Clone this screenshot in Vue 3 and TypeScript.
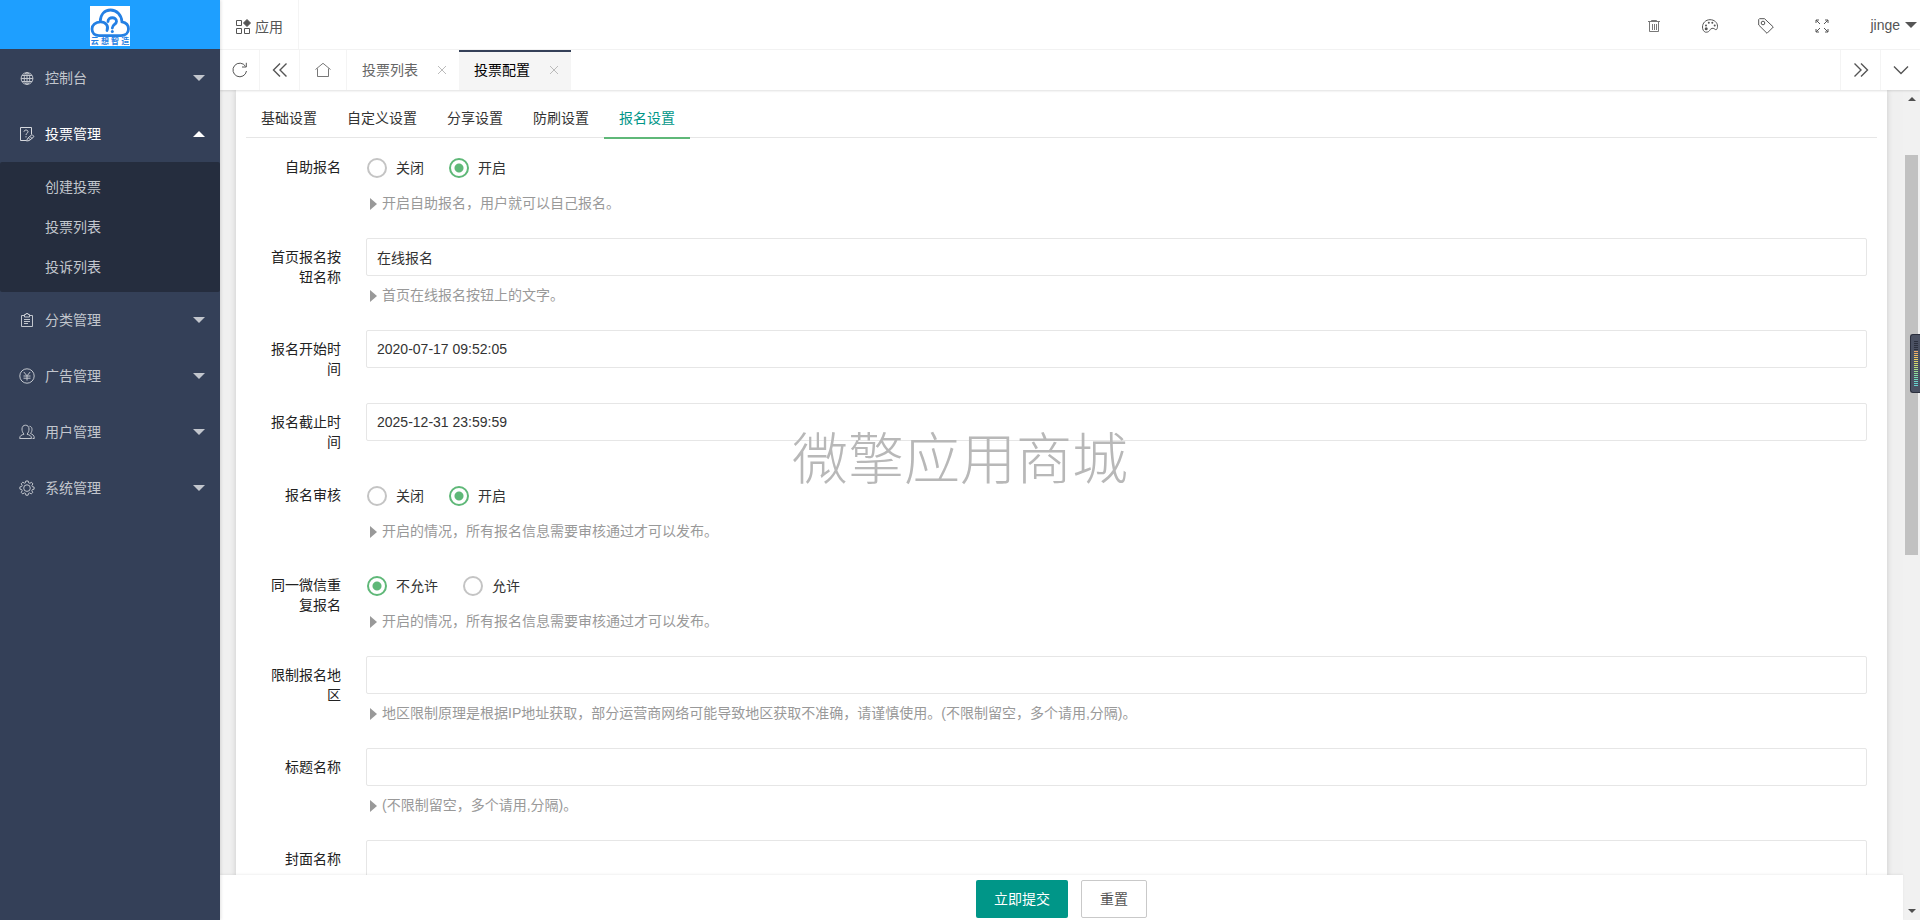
<script setup lang="ts">
import { ref } from 'vue'

interface MenuItem { title: string; icon: string; children?: string[] }
interface Option { text: string; value: string }
interface Field {
  id: string
  label: string
  kind: 'radio' | 'text'
  options?: Option[]
  help?: string
}

const menu: MenuItem[] = [
  { title: '控制台', icon: 'globe' },
  { title: '投票管理', icon: 'vote', children: ['创建投票', '投票列表', '投诉列表'] },
  { title: '分类管理', icon: 'clipboard' },
  { title: '广告管理', icon: 'yen' },
  { title: '用户管理', icon: 'users' },
  { title: '系统管理', icon: 'gear' },
]
const openMenu = ref('投票管理')

const formTabs: string[] = ['基础设置', '自定义设置', '分享设置', '防刷设置', '报名设置']
const activeTab = ref('报名设置')

const switchOptions: Option[] = [
  { text: '关闭', value: '0' },
  { text: '开启', value: '1' },
]
const reviewHelp = '开启的情况，所有报名信息需要审核通过才可以发布。'

const fields: Field[] = [
  { id: 'self', label: '自助报名', kind: 'radio', options: switchOptions, help: '开启自助报名，用户就可以自己报名。' },
  { id: 'button', label: '首页报名按钮名称', kind: 'text', help: '首页在线报名按钮上的文字。' },
  { id: 'start', label: '报名开始时间', kind: 'text' },
  { id: 'end', label: '报名截止时间', kind: 'text' },
  { id: 'review', label: '报名审核', kind: 'radio', options: switchOptions, help: reviewHelp },
  {
    id: 'repeat',
    label: '同一微信重复报名',
    kind: 'radio',
    options: [{ text: '不允许', value: '0' }, { text: '允许', value: '1' }],
    help: reviewHelp,
  },
  { id: 'area', label: '限制报名地区', kind: 'text', help: '地区限制原理是根据IP地址获取，部分运营商网络可能导致地区获取不准确，请谨慎使用。(不限制留空，多个请用,分隔)。' },
  { id: 'title', label: '标题名称', kind: 'text', help: '(不限制留空，多个请用,分隔)。' },
  { id: 'cover', label: '封面名称', kind: 'text' },
]

const initial: Record<string, string> = {
  self: '1',
  button: '在线报名',
  start: '2020-07-17 09:52:05',
  end: '2025-12-31 23:59:59',
  review: '1',
  repeat: '0',
  area: '',
  title: '',
  cover: '',
}
const values = ref<Record<string, string>>({ ...initial })
const reset = () => { values.value = { ...initial } }
const toggle = (title: string) => { openMenu.value = openMenu.value === title ? '' : title }

const meterColors: string[] = [
  '#2b2f3d', '#2b2f3d', '#2b2f3d', '#2b2f3d', '#2b2f3d',
  '#f0a868', '#f0b266', '#f0bc64', '#efc662', '#ecd062', '#e2d566', '#d6d96c',
  '#c8dc74', '#b9de7c', '#aadf86', '#9cdf90', '#8fde9b', '#84dda6', '#7adbb1', '#72d9bc', '#6cd6c6', '#66d3cf', '#66d3cf',
]
</script>

<template>
  <div class="app">
    <aside class="side">
      <div class="brand">
        <svg class="logo" viewBox="0 0 40 40" role="img" aria-label="云想智造">
          <rect width="40" height="40" fill="#fff" />
          <g fill="none" stroke="#2480e4" stroke-width="2.8" stroke-linecap="round">
            <path d="M17 24.500C19 20 15.500 15.800 10.500 15.900C5.500 16 2 19.200 2 23C2 27.200 5 29.600 9 29.600H31C35.500 29.600 38.500 26.800 38.500 23C38.500 19.300 36 16.600 32 15.900C31.500 8.500 26.500 4 20.500 4C14.500 4 10.500 8.500 10.200 15.500" />
            <path d="M18 15.500C18 10.500 26.500 10.500 26.500 15.500C26.500 18.500 22.300 18.500 22.300 22" />
          </g>
          <circle cx="22.300" cy="25.500" r="1.500" fill="#2480e4" />
          <text class="logo-text" x="20" y="38.200" text-anchor="middle">云 想 智 造</text>
        </svg>
      </div>
      <nav>
        <ul class="menu">
          <li v-for="item in menu" :key="item.title">
            <button type="button" class="menu-item" :class="{ open: openMenu === item.title }" @click="toggle(item.title)">
              <svg class="ico" viewBox="0 0 16 16" aria-hidden="true">
                <g v-if="item.icon === 'globe'">
                  <circle cx="8" cy="8.500" r="5.900" />
                  <ellipse cx="8" cy="8.500" rx="2.800" ry="5.900" />
                  <path d="M2.100 8.500H13.900M8 2.600V14.400M3 5.500H13M3 11.500H13" />
                </g>
                <g v-else-if="item.icon === 'vote'">
                  <path d="M7 14.500H1.500V1.500H12.500V8M5 5.700C5 3.500 9 3.500 9 5.700C9 7.300 7 7.300 7 8.900M7 10.200V11.400" />
                  <path d="M7.500 15L8.500 12.500L13 8.500L15 10.500L10.500 14.500ZM11 10.500L13 12.500M9.500 12L11.500 14" />
                </g>
                <g v-else-if="item.icon === 'clipboard'">
                  <path d="M5 3.500H2.500V14.500H13.500V3.500H11M5.500 5V2.500H7V1.500H9V2.500H10.500V5ZM5 7.500H11M5 9.500H11M5 11.500H9" />
                </g>
                <g v-else-if="item.icon === 'yen'">
                  <circle cx="8" cy="8" r="7.200" />
                  <path d="M4.800 4L8 7.800L11.200 4M8 7.800V12.500M4.500 8H11.500M4.500 10.200H11.500" />
                </g>
                <g v-else-if="item.icon === 'users'">
                  <path d="M.7 14.500C.7 11.500 2.500 11 5 10.200C3.500 8.500 3 7 3 5C3 2.500 4.500 1.200 6.500 1.200C8.500 1.200 10 2.500 10 5C10 7 9.500 8.500 8 10.200C10.500 11 12.500 11.500 12.500 14.500Z" />
                  <path d="M10.500 2.200C12.500 2.500 13 4 13 5.500C13 7 12.500 8.300 11.500 9.500C13.500 10.500 15.300 11 15.300 14.500H13.500" />
                </g>
                <g v-else>
                  <path d="M6.800 1H9.200L9.600 2.800L10.900 3.300L12.500 2.300L13.900 3.900L12.900 5.400L13.400 6.700L15.100 7.100V9.200L13.300 9.600L12.800 10.800L13.800 12.400L12.200 13.900L10.700 12.900L9.500 13.400L9.100 15.200H6.900L6.500 13.400L5.300 12.900L3.700 13.900L2.200 12.300L3.200 10.800L2.700 9.500L.9 9.100V6.900L2.700 6.500L3.200 5.300L2.200 3.800L3.800 2.200L5.300 3.200L6.400 2.800Z" />
                  <circle cx="8" cy="8.100" r="3.300" />
                </g>
              </svg>
              <span class="menu-title">{{ item.title }}</span>
              <i class="caret" />
            </button>
            <ul v-if="item.children && openMenu === item.title" class="submenu">
              <li v-for="child in item.children" :key="child"><a href="#">{{ child }}</a></li>
            </ul>
          </li>
        </ul>
      </nav>
    </aside>

    <div class="main">
      <header class="top">
        <a href="#" class="apps">
          <svg class="ico" viewBox="0 0 16 16" aria-hidden="true">
            <path d="M1.500 1.500H6.500V6.500H1.500ZM1.500 9.500H6.500V14.500H1.500ZM9.500 9.500H14.500V14.500H9.500Z" />
            <path class="solid" d="M12 .5L15.500 4L12 7.500L8.500 4Z" />
          </svg>
          <span>应用</span>
        </a>
        <div class="tools">
          <button type="button" class="tool" aria-label="清理">
            <svg class="ico light" viewBox="0 0 16 16"><path d="M2 3.500H14M5.500 3V2.500H10.500V3M3.500 4V13.500H12.500V4M6.500 6V12M8.500 6V12M10.500 6V12" /></svg>
          </button>
          <button type="button" class="tool" aria-label="主题">
            <svg class="ico" viewBox="0 0 16 16">
              <path d="M3.500 14.200C1.500 13.500 .5 11.500 .5 9C.5 5 3.700 1.700 8 1.700C12.300 1.700 15.500 4.500 15.500 8.200C15.500 10.800 14.500 12.300 13.300 11.500C11.800 10.300 10.500 9.700 8.800 11C7.500 12 7.500 14.400 3.500 14.200Z" />
              <g class="dots"><circle cx="4.200" cy="10.800" r="1.500" /><circle cx="4" cy="7.500" r="1" /><circle cx="6.800" cy="4.800" r="1" /><circle cx="10.300" cy="4.800" r="1" /><circle cx="12.700" cy="7.500" r="1" /></g>
            </svg>
          </button>
          <button type="button" class="tool" aria-label="便签">
            <svg class="ico" viewBox="0 0 16 16"><path d="M.7 1.500L1.500 .7H6.500L15.300 9L9 15.300L.7 7Z" /><circle cx="5" cy="5" r="1.800" /></svg>
          </button>
          <button type="button" class="tool" aria-label="全屏">
            <svg class="ico" viewBox="0 0 16 16"><path d="M2 5V2H5M2 2L6 6M11 2H14V5M14 2L10 6M2 11V14H5M2 14L6 10M14 11V14H11M14 14L10 10" /></svg>
          </button>
          <button type="button" class="user">jinge<i class="caret" /></button>
        </div>
      </header>

      <div class="tabbar">
        <button type="button" class="cell" aria-label="刷新">
          <svg class="ico" viewBox="0 0 16 16"><path d="M14.500 9A6.800 6.800 0 1 1 13.500 4.300M14.300 .8V5H10" /></svg>
        </button>
        <button type="button" class="cell" aria-label="向左">
          <svg class="ico bold" viewBox="0 0 16 16"><path d="M8 1.500L1.500 8L8 14.500M14.500 1.500L8 8L14.500 14.500" /></svg>
        </button>
        <button type="button" class="cell home" aria-label="首页">
          <svg class="ico light" viewBox="0 0 16 16"><path d="M.5 7.500L8 1.300L15.500 7.500M2.500 6.500V14.500H13.500V6.500" /></svg>
        </button>
        <div class="page-tab">
          <a href="#">投票列表</a>
          <button type="button" class="close" aria-label="关闭投票列表"><svg viewBox="0 0 8 8"><path d="M0 0L8 8M8 0L0 8" /></svg></button>
        </div>
        <div class="page-tab current">
          <a href="#">投票配置</a>
          <button type="button" class="close" aria-label="关闭投票配置"><svg viewBox="0 0 8 8"><path d="M0 0L8 8M8 0L0 8" /></svg></button>
        </div>
        <button type="button" class="cell end" aria-label="向右">
          <svg class="ico bold" viewBox="0 0 16 16"><path d="M1.500 1.500L8 8L1.500 14.500M8 1.500L14.500 8L8 14.500" /></svg>
        </button>
        <button type="button" class="cell more" aria-label="更多">
          <svg class="ico bold" viewBox="0 0 16 16"><path d="M1 4.500L8 11.500L15 4.500" /></svg>
        </button>
      </div>

      <div class="frame">
        <form class="page" @submit.prevent @reset.prevent="reset">
          <div class="scroller">
            <div class="card">
              <div class="form-tabs" role="tablist">
                <button
                  v-for="tab in formTabs"
                  :key="tab"
                  type="button"
                  role="tab"
                  :aria-selected="activeTab === tab"
                  :class="{ active: activeTab === tab }"
                  @click="activeTab = tab"
                >{{ tab }}</button>
              </div>
              <div class="fields">
                <div v-for="field in fields" :key="field.id" class="field">
                  <label v-if="field.kind === 'text'" class="label" :for="field.id">{{ field.label }}</label>
                  <span v-else :id="field.id + '-label'" class="label">{{ field.label }}</span>
                  <div class="control">
                    <input v-if="field.kind === 'text'" :id="field.id" v-model="values[field.id]" type="text" class="input">
                    <div v-else class="radios" role="radiogroup" :aria-labelledby="field.id + '-label'">
                      <label v-for="opt in field.options" :key="opt.value" class="radio">
                        <input v-model="values[field.id]" type="radio" :name="field.id" :value="opt.value">
                        <span>{{ opt.text }}</span>
                      </label>
                    </div>
                    <p v-if="field.help" class="help"><i class="marker" />{{ field.help }}</p>
                  </div>
                </div>
              </div>
            </div>
          </div>
          <div class="footer">
            <button type="submit" class="btn primary">立即提交</button>
            <button type="reset" class="btn">重置</button>
          </div>
        </form>
        <div class="scrollbar" aria-hidden="true">
          <i class="arrow up" />
          <div class="track"><div class="thumb" /></div>
          <i class="arrow down" />
        </div>
      </div>
    </div>

    <div class="watermark">微擎应用商城</div>
    <div class="meter" aria-hidden="true">
      <i v-for="(color, i) in meterColors" :key="i" :style="{ background: color }" />
    </div>
  </div>
</template>

<style>
body { margin: 0; }
</style>

<style scoped>
* { box-sizing: border-box; }
.app {
  position: relative;
  display: flex;
  height: 100vh;
  overflow: hidden;
  background: #f0f0f0;
  color: #333;
  font: 14px/20px "Liberation Sans", "Noto Sans CJK SC", sans-serif;
}
button { font: inherit; color: inherit; border: 0; padding: 0; margin: 0; background: none; cursor: pointer; }
a { color: inherit; text-decoration: none; }
ul { list-style: none; margin: 0; padding: 0; }

.ico { width: 16px; height: 16px; flex: none; fill: none; stroke: currentColor; stroke-width: 1; display: block; }
.ico.bold { stroke-width: 1.4; }
.ico.light { stroke-width: .8; }
.solid { fill: currentColor; }
.dots { fill: currentColor; stroke: none; }
.caret { border: 6px solid transparent; border-top-color: currentColor; border-bottom-width: 0; }

.side { flex: none; width: 220px; background: #344058; color: #c2c6cd; box-shadow: 1px 0 3px rgba(0, 0, 0, .12); z-index: 2; }
.brand { height: 49px; display: flex; justify-content: center; align-items: center; padding-top: 3px; background: #1e9fff; margin-bottom: 1px; }
.logo { width: 40px; height: 40px; }
.logo-text { font-size: 8px; font-weight: bold; fill: #2480e4; }
.menu-item { display: flex; align-items: center; width: 100%; height: 56px; padding: 0 15px 0 19px; gap: 10px; text-align: left; }
.menu-title { flex: 1; }
.menu-item.open { color: #fff; }
.menu-item.open .ico { color: #d6d9de; }
.open .caret { border-width: 0 6px 6px; border-bottom-color: currentColor; }
.submenu { padding: 5px 0; background: #252d3e; border-radius: 2px; }
.submenu a { display: block; padding-left: 45px; line-height: 40px; }

.main { flex: 1; min-width: 0; display: flex; flex-direction: column; }
.top { flex: none; height: 50px; display: flex; justify-content: space-between; background: #fff; border-bottom: 1px solid #f4f4f4; color: #555; }
.apps { display: flex; align-items: center; gap: 4px; padding: 4px 15px 0; border-right: 1px solid #f4f4f4; }
.tools { display: flex; align-items: center; padding: 0 3px 0 0; }
.tool { display: flex; align-items: center; padding: 3px 20px 0; height: 49px; }
.user { display: flex; align-items: center; gap: 5px; padding-left: 20px; height: 49px; }

.tabbar { flex: none; height: 40px; display: flex; background: #fff; color: #555; box-shadow: 0 1px 2px rgba(0, 0, 0, .12); z-index: 1; }
.cell { display: flex; align-items: center; justify-content: center; width: 40px; border-right: 1px solid #f4f4f4; }
.cell.home { width: 47px; }
.cell.end { margin-left: auto; width: 41px; border-left: 1px solid #f4f4f4; }
.cell.more { width: 39px; border-right: 0; }
.page-tab { display: flex; align-items: center; gap: 20px; padding: 0 13px 2px 15px; border-top: 2px solid transparent; color: #666; }
.page-tab.current { background: #f5f5f5; border-top-color: #344058; color: #000; }
.close { width: 8px; height: 8px; display: flex; }
.close svg { width: 8px; height: 8px; stroke: #bbb; stroke-width: 1; }

.frame { flex: 1; min-height: 0; display: flex; }
.page { flex: 1; min-width: 0; display: flex; flex-direction: column; }
.scroller { flex: 1; min-height: 0; overflow: hidden; padding: 0 16px; }
.card { min-height: 100%; background: #fff; padding: 8px 10px 0; box-shadow: 0 0 6px rgba(0, 0, 0, .16); }
.form-tabs { display: flex; border-bottom: 1px solid #e6e6e6; }
.form-tabs button { height: 41px; padding: 0 15px; margin-bottom: -2px; border-bottom: 2px solid transparent; }
.form-tabs button.active { color: #009688; border-bottom-color: #5fb878; }
.fields { padding: 10px 10px 0 0; }
.field { display: flex; gap: 10px; margin-bottom: 15px; }
.label { flex: none; width: 110px; padding: 9px 15px; text-align: right; color: #222; }
.control { flex: 1; min-width: 0; }
.input { display: block; width: 100%; height: 38px; padding: 0 10px; border: 1px solid #e6e6e6; border-radius: 2px; font: inherit; color: #333; background: #fff; outline: none; }
.radios { display: flex; gap: 25px; height: 36px; padding: 4px 1px 0; align-items: center; }
.radio { display: flex; align-items: center; gap: 9px; }
.radio input { appearance: none; width: 20px; height: 20px; margin: 0; border: 2px solid #c4c4c4; border-radius: 50%; }
.radio input:checked { border-color: #5fb878; background: radial-gradient(circle, #5fb878 4px, transparent 5px); }
.help { display: flex; align-items: center; gap: 5px; margin: 0; padding-left: 4px; line-height: 39px; color: #999; }
.marker { border: 6px solid transparent; border-left: 7px solid #999; border-right: 0; }

.footer { flex: none; display: flex; justify-content: center; align-items: center; gap: 13px; height: 45px; padding-top: 3px; background: #fff; box-shadow: 0 -1px 2px rgba(0, 0, 0, .06); z-index: 1; }
.btn { height: 38px; padding: 0 18px; border: 1px solid #c9c9c9; border-radius: 2px; background: #fff; color: #555; }
.btn.primary { border: 0; background: #009688; color: #fff; }

.scrollbar { flex: none; width: 17px; display: flex; flex-direction: column; align-items: center; background: #f1f1f1; padding: 7px 0; }
.arrow { border: 4px solid transparent; }
.arrow.up { border-top-width: 0; border-bottom-color: #505050; margin: 0 0 8px; }
.arrow.down { border-bottom-width: 0; border-top-color: #505050; }
.track { flex: 1; width: 13px; }
.thumb { height: 50%; margin-top: 46px; background: #c1c1c1; }

.watermark { position: absolute; left: 50%; top: 50%; transform: translate(-50%, -50%); font-size: 56px; font-weight: 300; line-height: 56px; color: #b8b8b8; white-space: nowrap; pointer-events: none; z-index: 3; }
.meter { position: absolute; right: 0; top: 334px; width: 10px; height: 59px; padding: 6px 2px 0 3px; display: flex; flex-direction: column; gap: 1px; background: #4b5162; border: 1px solid #2b2f3d; border-right: 0; border-radius: 3px 0 0 3px; z-index: 3; }
.meter i { height: 1px; flex: none; }
</style>
